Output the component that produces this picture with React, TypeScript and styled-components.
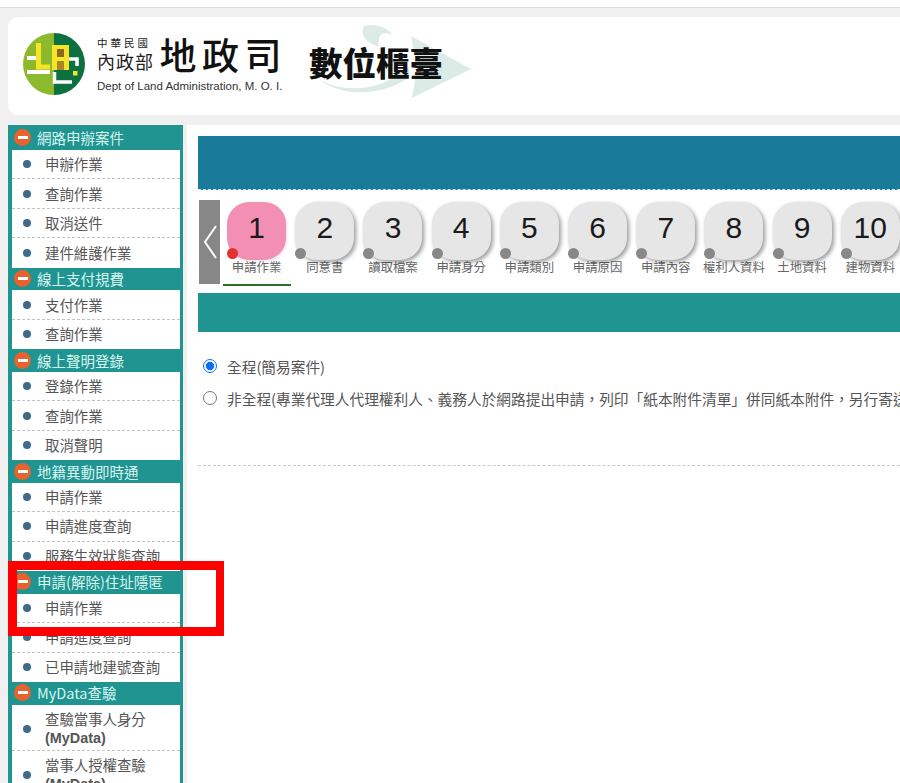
import React from 'react'
import styled, { createGlobalStyle } from 'styled-components'

const CJK = `"Noto Sans CJK TC", "Liberation Sans", sans-serif`

const menu = [
	{ title: '網路申辦案件', items: ['申辦作業', '查詢作業', '取消送件', '建件維護作業'] },
	{ title: '線上支付規費', items: ['支付作業', '查詢作業'] },
	{ title: '線上聲明登錄', items: ['登錄作業', '查詢作業', '取消聲明'] },
	{ title: '地籍異動即時通', items: ['申請作業', '申請進度查詢', '服務生效狀態查詢'] },
	{ title: '申請(解除)住址隱匿', items: ['申請作業', '申請進度查詢', '已申請地建號查詢'] }
]

const myData = ['查驗當事人身分', '當事人授權查驗']

const steps = [
	'申請作業',
	'同意書',
	'讀取檔案',
	'申請身分',
	'申請類別',
	'申請原因',
	'申請內容',
	'權利人資料',
	'土地資料',
	'建物資料'
]

const App = () => (
	<Page>
		<GlobalStyle />
		<TopStrip />
		<Banner>
			<Logo />
			<Ministry>
				<MinistryRow>
					<MinistryNames>
						<RocName>中華民國</RocName>
						<MoiName>內政部</MoiName>
					</MinistryNames>
					<DeptName>地政司</DeptName>
				</MinistryRow>
				<EnglishName>Dept of Land Administration, M. O. I.</EnglishName>
			</Ministry>
			<Product>
				<Swoosh />
				<ProductName>數位櫃臺</ProductName>
			</Product>
		</Banner>
		<Columns>
			<Sidebar>
				{menu.map((group, i) => (
					<section key={group.title}>
						<GroupTitle $first={i === 0}>
							<MinusIcon />
							{group.title}
						</GroupTitle>
						<ItemList>
							{group.items.map(item => (
								<Item key={item}>
									<Bullet />
									{item}
								</Item>
							))}
						</ItemList>
					</section>
				))}
				<section>
					<GroupTitle>
						<MinusIcon />
						MyData查驗
					</GroupTitle>
					<ItemList>
						{myData.map(item => (
							<Item key={item} $tall>
								<Bullet />
								<span>
									{item}
									<br />
									<strong>(MyData)</strong>
								</span>
							</Item>
						))}
					</ItemList>
				</section>
				<Highlight />
			</Sidebar>
			<Main>
				<BlueBar />
				<Stepper>
					<PrevButton>
						<svg width="14" height="34" viewBox="0 0 14 34" fill="none">
							<path d="M13 1 L2 17 L13 33" stroke="#fff" strokeWidth="2" />
						</svg>
					</PrevButton>
					<StepList>
						{steps.map((label, i) => (
							<Step key={label} $active={i === 0}>
								<Tile $active={i === 0}>
									{i + 1}
									<TileDot $active={i === 0} />
								</Tile>
								<StepLabel>{label}</StepLabel>
							</Step>
						))}
					</StepList>
				</Stepper>
				<TealBar />
				<Options>
					<OptionRow>
						<Radio type="radio" name="mode" defaultChecked />
						全程(簡易案件)
					</OptionRow>
					<OptionRow>
						<Radio type="radio" name="mode" />
						非全程(專業代理人代理權利人、義務人於網路提出申請，列印「紙本附件清單」併同紙本附件，另行寄送至受理地政事務所)
					</OptionRow>
				</Options>
				<Divider />
			</Main>
		</Columns>
	</Page>
)

// round emblem, half light and half dark green
const Logo = () => (
	<LogoMark width="64" height="64" viewBox="0 0 64 64">
		<path d="M32 1 A31 31 0 0 0 32 63 Z" fill="#8dba2d" />
		<path d="M32 1 A31 31 0 0 1 32 63 Z" fill="#0d7040" />
		<path d="M5 26 H14 M5 40 H28" stroke="#fff" strokeWidth="4" fill="none" />
		<path d="M16.5 11 V35 H28" stroke="#f5e526" strokeWidth="5" fill="none" />
		<path d="M30 38 V13 H47 V38 Z" fill="#f5e526" />
		<path d="M35 17 H42 V25 H35 Z" fill="#8a6a1c" />
		<path d="M35 29 H42 V38 H35 Z" fill="#a9862a" />
		<path d="M32.5 40 V50 H50 M47 27 H55 V34" stroke="#fff" strokeWidth="3.5" fill="none" />
		<rect x="51" y="39" width="4.5" height="4.5" fill="#f5e526" />
	</LogoMark>
)

const Swoosh = () => (
	<SwooshArt width="156" height="78" viewBox="0 0 156 78">
		<path d="M47 3 C60 0 70 5 76 12 C66 8 60 10 62 24 C50 20 42 12 47 3 Z" fill="#dbebe6" />
		<path d="M2 56 C20 68 50 68 70 58 L92 44 L92 54 C70 72 25 76 2 56 Z" fill="#dbebe6" />
		<path d="M94 13 L154 46 L95 75 L100 46 Z" fill="#dbebe6" />
	</SwooshArt>
)

const MinusIcon = () => (
	<Minus>
		<MinusDash />
	</Minus>
)

const GlobalStyle = createGlobalStyle`
	html, body {
		margin: 0;
		height: 100%;
		overflow: hidden;
		background: #f0f0f0;
	}

	* {
		box-sizing: border-box;
	}
`

const Page = styled.div`
	height: 783px;
	overflow: hidden;
	font-family: ${CJK};
`

const TopStrip = styled.div`
	height: 8px;
	background: #fff;
	border-bottom: 1px solid #dcdcdc;
`

const Banner = styled.header`
	display: flex;
	align-items: center;
	height: 98px;
	margin: 9px 0 10px 8px;
	padding-left: 14px;
	background: #fff;
	border-radius: 10px 0 0 10px;
`

const LogoMark = styled.svg`
	flex: none;
	margin-right: 11px;
	margin-top: -4px;
`

const Ministry = styled.div`
	display: flex;
	flex-direction: column;
	width: 190px;
	margin-top: -6px;
	color: #222;
`

const MinistryRow = styled.div`
	display: flex;
	align-items: center;
	height: 42px;
`

const MinistryNames = styled.div`
	display: flex;
	flex-direction: column;
	width: 65px;
`

const RocName = styled.span`
	font-size: 10.5px;
	line-height: 14px;
	letter-spacing: 3px;
`

const MoiName = styled.span`
	font-size: 18px;
	line-height: 22px;
	letter-spacing: 1px;
`

const DeptName = styled.span`
	font-size: 37px;
	line-height: 42px;
	font-weight: 500;
	letter-spacing: 5.5px;
	color: #111;
	white-space: nowrap;
`

const EnglishName = styled.span`
	margin-top: 5px;
	font-family: 'Liberation Sans', sans-serif;
	font-size: 11.5px;
	line-height: 13px;
	white-space: nowrap;
	color: #333;
`

const Product = styled.div`
	position: relative;
	margin-left: 22px;
	margin-top: -9px;
`

const SwooshArt = styled.svg`
	position: absolute;
	left: 8px;
	top: -19px;
`

const ProductName = styled.span`
	position: relative;
	display: block;
	font-size: 33.5px;
	line-height: 40px;
	font-weight: 900;
	color: #111;
	white-space: nowrap;
`

const Columns = styled.div`
	display: flex;
	gap: 4px;
	padding-left: 8px;
`

const Sidebar = styled.nav`
	position: relative;
	flex: none;
	width: 175px;
	height: 658px;
	padding: 0 3px 0 4px;
	background: #1f9490;
`

const GroupTitle = styled.h3<{ $first?: boolean }>`
	display: flex;
	align-items: center;
	height: ${p => (p.$first ? '25px' : '22.8px')};
	margin: 0;
	padding-bottom: ${p => (p.$first ? '0' : '1px')};
	font-size: 14.5px;
	font-weight: 400;
	color: #d9f6f1;
	white-space: nowrap;
`

const Minus = styled.span`
	flex: none;
	display: flex;
	align-items: center;
	justify-content: center;
	width: 17px;
	height: 17px;
	margin: 0 6px 0 2px;
	border-radius: 50%;
	background: #e8622f;
`

const MinusDash = styled.span`
	width: 10px;
	height: 3px;
	background: #fff;
`

const ItemList = styled.ul`
	margin: 0;
	padding: 0;
	list-style: none;
	background: #fff;
`

const Item = styled.li<{ $tall?: boolean }>`
	display: flex;
	align-items: center;
	height: ${p => (p.$tall ? '46px' : '29.4px')};
	padding: ${p => (p.$tall ? '3px' : '0')} 0 0 10.5px;
	border-bottom: 1px dashed #c4c4c4;
	font-size: 14.4px;
	line-height: 18px;
	color: #555;
	white-space: nowrap;

	&:last-child {
		border-bottom: ${p => (p.$tall ? '1px dashed #c4c4c4' : 'none')};
	}

	strong {
		font-family: 'Liberation Sans', sans-serif;
		font-size: 14.4px;
		font-weight: 700;
	}
`

const Bullet = styled.span`
	flex: none;
	width: 8px;
	height: 8px;
	margin-right: 14.5px;
	border-radius: 50%;
	background: #3f6a8a;
`

const Highlight = styled.div`
	position: absolute;
	left: 0;
	top: 436px;
	width: 216px;
	height: 75px;
	border: solid #f00;
	border-width: 9px 8px 9px 9px;
`

const Main = styled.main`
	flex: 1;
	min-width: 0;
	height: 658px;
	padding: 11px 0 0 11px;
	background: #fff;
	overflow: hidden;
`

const BlueBar = styled.div`
	height: 54px;
	background: #1a7a9a;
	border-bottom: 1px dashed #cfeaf2;
`

const Stepper = styled.div`
	display: flex;
	align-items: flex-start;
	height: 103px;
	padding: 10px 0 0 1px;
`

const PrevButton = styled.div`
	flex: none;
	display: flex;
	align-items: center;
	justify-content: center;
	width: 21px;
	height: 84px;
	background: #878787;
`

const StepList = styled.div`
	display: flex;
	margin-left: 2.5px;
`

const Step = styled.div<{ $active?: boolean }>`
	flex: none;
	display: flex;
	flex-direction: column;
	align-items: center;
	width: 68.2px;
	height: 86px;
	padding-top: 2px;
	border-bottom: 2px solid ${p => (p.$active ? '#2a6e2a' : 'transparent')};
`

const Tile = styled.div<{ $active?: boolean }>`
	position: relative;
	display: flex;
	align-items: center;
	justify-content: center;
	width: 59px;
	height: 58px;
	border-radius: 22px;
	background: ${p => (p.$active ? '#f48fb4' : '#e6e6e6')};
	box-shadow: ${p => (p.$active ? '1px 1px 3px rgba(0, 0, 0, 0.12)' : '2px 2px 4px rgba(0, 0, 0, 0.4)')};
	padding-bottom: 6px;
	font-family: 'Liberation Sans', sans-serif;
	font-size: 30px;
	color: #1a1a1a;
`

const TileDot = styled.span<{ $active?: boolean }>`
	position: absolute;
	left: 0;
	bottom: 1px;
	width: 11px;
	height: 11px;
	border-radius: 50%;
	background: ${p => (p.$active ? '#e03030' : '#888')};
`

const StepLabel = styled.span`
	margin-top: -1px;
	font-size: 12.4px;
	line-height: 16px;
	color: #666;
	white-space: nowrap;
`

const TealBar = styled.div`
	height: 39px;
	background: #1f9490;
`

const Options = styled.div`
	display: flex;
	flex-direction: column;
	gap: 12px;
	padding: 24px 0 0 5px;
`

const OptionRow = styled.label`
	display: flex;
	align-items: center;
	height: 20px;
	font-size: 14.7px;
	color: #555;
	white-space: nowrap;
`

const Radio = styled.input`
	flex: none;
	width: 14px;
	height: 14px;
	margin: 0 10px 0 0;
	accent-color: #0d6efd;
`

const Divider = styled.div`
	margin-top: 57px;
	border-top: 1px dashed #c8c8c8;
`

export default App
